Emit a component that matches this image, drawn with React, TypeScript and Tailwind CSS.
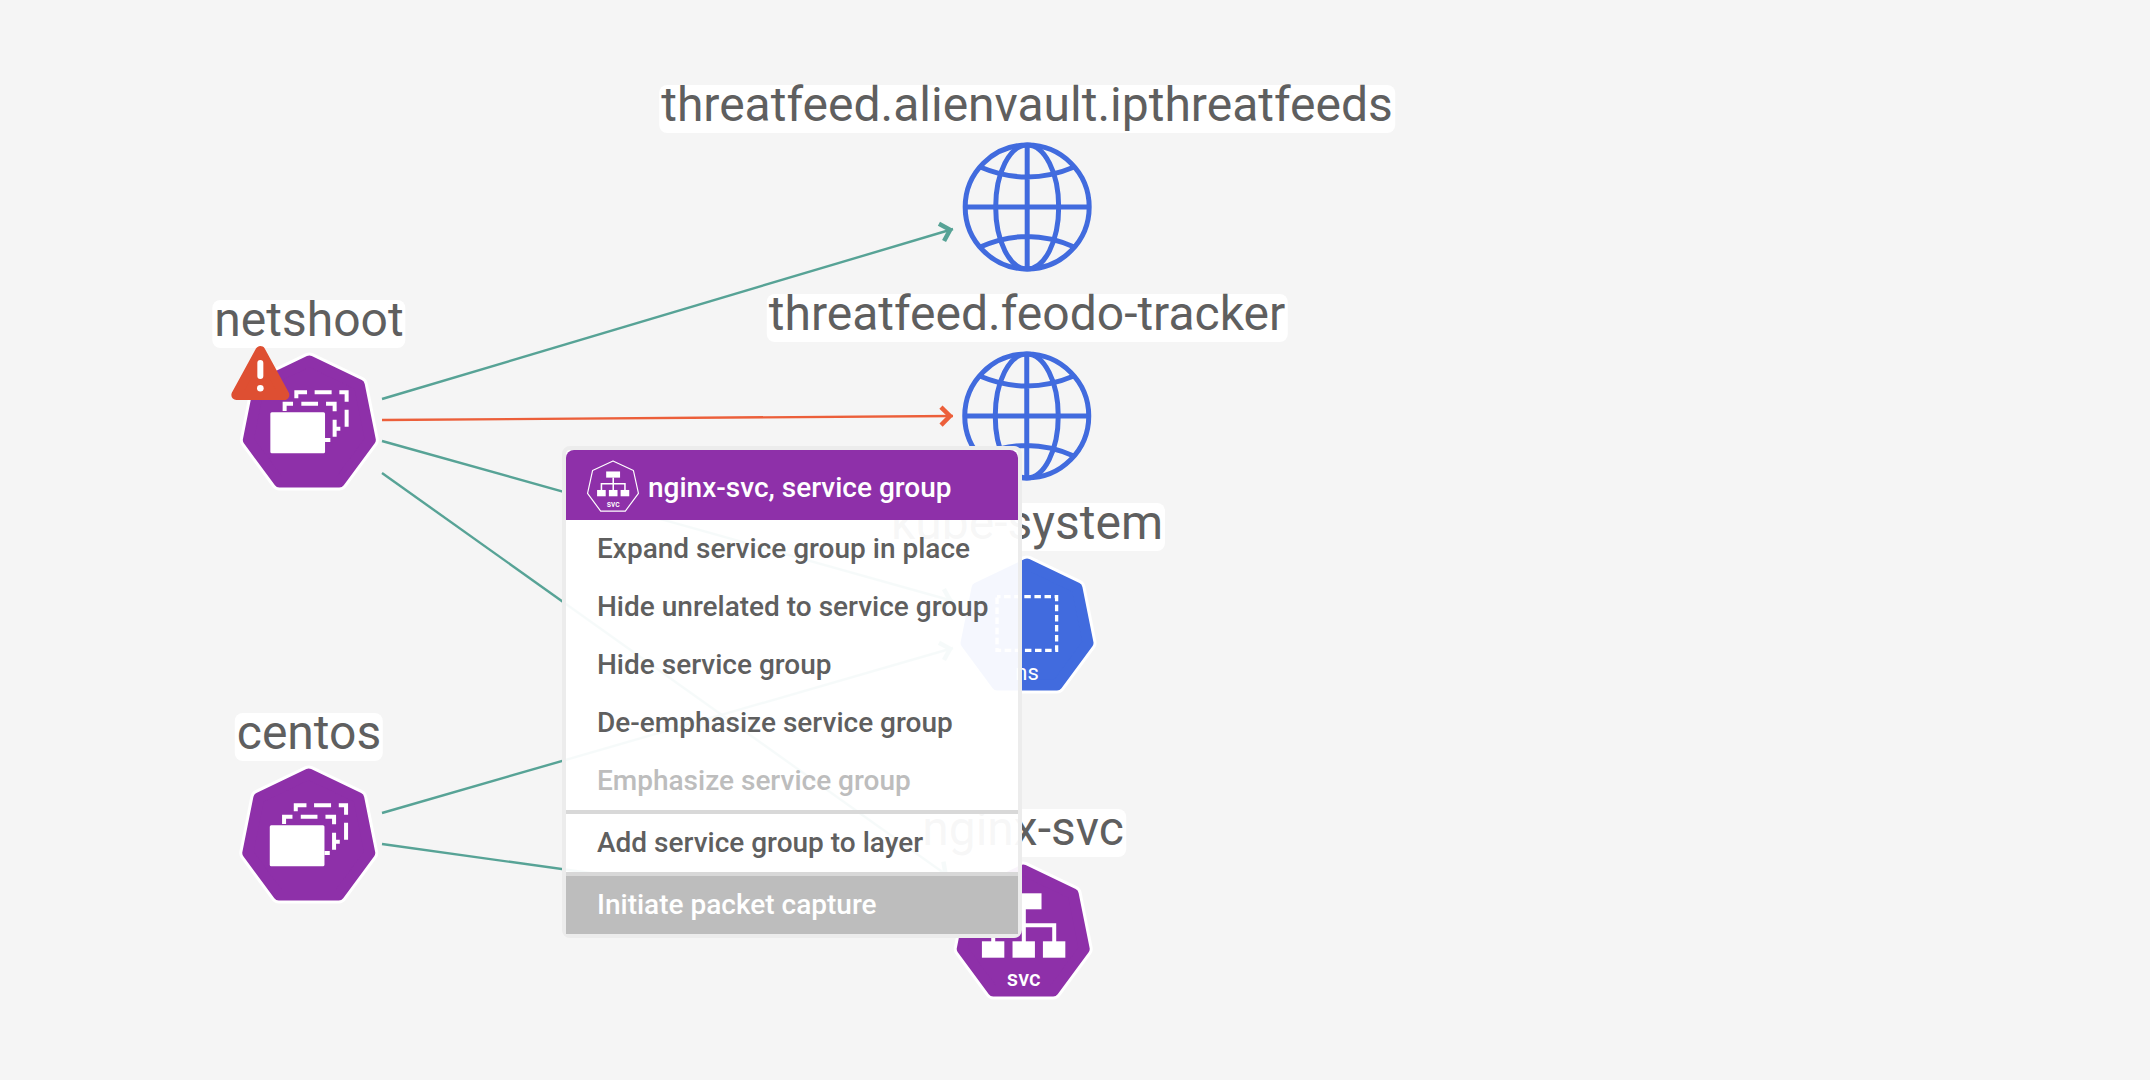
import type { ReactNode } from 'react';

const HEPTAGON = 'M70 9 120 33 131 88 100 130 40 130 9 88 20 33Z';

function Heptagon({ tone, children }: { tone: string; children: ReactNode }) {
  return (
    <svg viewBox="0 0 140 140" className="size-[140px] overflow-visible" aria-hidden="true">
      <path d={HEPTAGON} className="fill-white stroke-white" strokeWidth="17" strokeLinejoin="round" />
      <path d={HEPTAGON} fill={tone} stroke={tone} strokeWidth="11" strokeLinejoin="round" />
      {children}
    </svg>
  );
}

function PodGroupIcon() {
  return (
    <Heptagon tone="#8e30a9">
      <rect x="31" y="60.3" width="54.7" height="41" rx="1.5" fill="#fff" />
      <g fill="none" stroke="#fff" strokeWidth="4">
        <path d="M45.3 59V51.7H53.7M62 51.7H78.7M86.7 51.7H95.3V59.3M95.3 67.7V84.7M95.3 76.7H101M85.7 88H91" />
        <path d="M57 46.3V40.3H67.7M75.3 40.3H92.3M100 40.3H107.3V49.7M107.3 57.7V74.7" />
      </g>
    </Heptagon>
  );
}

function ServiceMark() {
  return (
    <>
      <g fill="#fff">
        <rect x="52.3" y="32.3" width="36" height="16" />
        <rect x="28.7" y="80.3" width="22.4" height="16.4" />
        <rect x="59.3" y="80.3" width="22.4" height="16.4" />
        <rect x="89.7" y="80.3" width="22.4" height="16.4" />
      </g>
      <path d="M70.6 48V81M40 81V64.2H101V81" fill="none" stroke="#fff" strokeWidth="4" />
      <text x="70.4" y="125" textAnchor="middle" fill="#fff" fontSize="22" fontWeight="500">
        svc
      </text>
    </>
  );
}

function ServiceIcon() {
  return (
    <Heptagon tone="#8e30a9">
      <ServiceMark />
    </Heptagon>
  );
}

function NamespaceIcon() {
  return (
    <Heptagon tone="#416bde">
      <rect
        x="40"
        y="41.7"
        width="59.6"
        height="53.6"
        fill="none"
        stroke="#fff"
        strokeWidth="3.3"
        strokeDasharray="6.5 3.6"
        strokeDashoffset="3"
      />
      <text x="70" y="125" textAnchor="middle" fill="#fff" fontSize="22">
        ns
      </text>
    </Heptagon>
  );
}

function GlobeIcon() {
  return (
    <svg viewBox="-70 -70 140 140" className="size-[140px]" fill="none" stroke="#416bde" strokeWidth="5" aria-hidden="true">
      <circle r="62" />
      <ellipse rx="31.5" ry="62" />
      <path d="M0-62V62M-62 0H62M-47-40Q0-20 47-40M-47 40Q0 19 47 40" />
    </svg>
  );
}

function AlertIcon() {
  return (
    <svg viewBox="0 0 60 56" className="absolute -top-[7px] -left-[9px] h-14 w-[60px]" role="img" aria-label="Alert">
      <path d="M30 6 54 50H6Z" fill="#de4f32" stroke="#de4f32" strokeWidth="10" strokeLinejoin="round" />
      <path d="M30 18V31" stroke="#fff" strokeWidth="6" strokeLinecap="round" />
      <circle cx="30" cy="43.3" r="3.3" fill="#fff" />
    </svg>
  );
}

function Node({ place, label, alert, children }: { place: string; label: string; alert?: boolean; children: ReactNode }) {
  return (
    <div className={`absolute flex -translate-x-1/2 flex-col items-center gap-1 ${place}`}>
      <span className="h-12 rounded-lg bg-white px-0.5 text-5xl leading-10 whitespace-nowrap text-[#5f5f5f]">{label}</span>
      <div className="relative">
        {children}
        {alert && <AlertIcon />}
      </div>
    </div>
  );
}

const TEAL = '#57a396';
const RED = '#ec5f3a';

const EDGES = [
  { from: [382, 399], to: [953, 229], color: TEAL },
  { from: [382, 420], to: [953, 416], color: RED },
  { from: [382, 441], to: [953, 601], color: TEAL },
  { from: [382, 473], to: [948, 876], color: TEAL },
  { from: [382, 813], to: [953, 648], color: TEAL },
  { from: [382, 844], to: [948, 923], color: TEAL },
];

function Edges() {
  return (
    <svg className="absolute inset-0 size-full" fill="none" aria-hidden="true">
      {EDGES.map(({ from, to, color }) => {
        const angle = (Math.atan2(to[1] - from[1], to[0] - from[0]) * 180) / Math.PI;
        return (
          <g key={`${from}-${to}`} stroke={color}>
            <path d={`M${from[0]} ${from[1]}L${to[0]} ${to[1]}`} strokeWidth="2.4" />
            <path d="M-12-9-3 0-12 9" strokeWidth="4.5" transform={`translate(${to[0]} ${to[1]}) rotate(${angle})`} />
          </g>
        );
      })}
    </svg>
  );
}

const ITEM = 'block h-[58px] w-full pr-[30px] pl-[31px] text-left whitespace-nowrap';

function ContextMenu() {
  return (
    <div
      role="menu"
      aria-label="nginx-svc, service group"
      className="absolute top-[446px] left-[562px] rounded-lg border-4 border-[#ececec] bg-white/95 bg-clip-padding text-[28px] leading-[56px] font-medium text-[#5f5f5f]"
    >
      <div className="flex h-[70px] items-center gap-2 rounded-t-lg bg-[#8e30a9] pt-1.5 pl-5 text-white">
        <svg viewBox="0 0 140 140" className="mb-1 size-[54px]" aria-hidden="true">
          <path
            d="M70 5 123 30 136 89 102 135 38 135 4 89 17 30Z"
            fill="none"
            stroke="#fff"
            strokeWidth="3"
            strokeLinejoin="round"
          />
          <ServiceMark />
        </svg>
        <span>nginx-svc, service group</span>
      </div>
      <button role="menuitem" className={ITEM}>Expand service group in place</button>
      <button role="menuitem" className={ITEM}>Hide unrelated to service group</button>
      <button role="menuitem" className={ITEM}>Hide service group</button>
      <button role="menuitem" className={ITEM}>De-emphasize service group</button>
      <button role="menuitem" disabled className={`${ITEM} text-[#bdbdbd]`}>Emphasize service group</button>
      <div role="separator" className="h-1 bg-[#d8d8d8]" />
      <button role="menuitem" className={ITEM}>Add service group to layer</button>
      <div role="separator" className="h-1 bg-[#d8d8d8]" />
      <button role="menuitem" disabled className={`${ITEM} bg-[#bdbdbd] text-white`}>Initiate packet capture</button>
    </div>
  );
}

export default function App() {
  return (
    <main className="relative min-h-screen overflow-hidden bg-[#f5f5f5] font-[Roboto,sans-serif]">
      <Edges />
      <Node place="top-[300px] left-[309px]" label="netshoot" alert>
        <PodGroupIcon />
      </Node>
      <Node place="top-[713px] left-[309px]" label="centos">
        <PodGroupIcon />
      </Node>
      <Node place="top-[85px] left-[1027px]" label="threatfeed.alienvault.ipthreatfeeds">
        <GlobeIcon />
      </Node>
      <Node place="top-[294px] left-[1027px]" label="threatfeed.feodo-tracker">
        <GlobeIcon />
      </Node>
      <Node place="top-[503px] left-[1027px]" label="kube-system">
        <NamespaceIcon />
      </Node>
      <Node place="top-[809px] left-[1023px]" label="nginx-svc">
        <ServiceIcon />
      </Node>
      <ContextMenu />
    </main>
  );
}
